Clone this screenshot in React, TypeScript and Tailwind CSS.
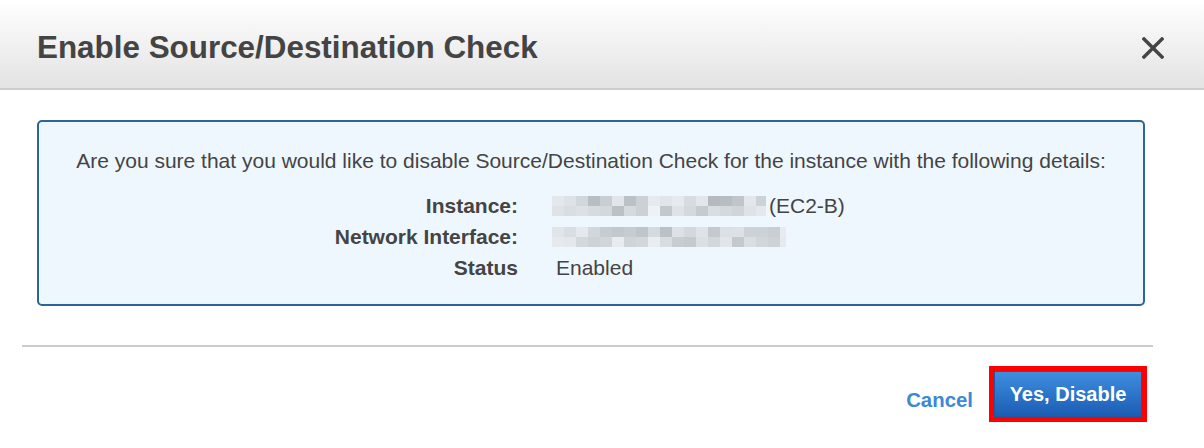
import React from "react";

// Nuances des blocs pixellisés (valeurs masquées)
const instanceBlur: string[][] = [
  ["#e4e8ec", "#dde2e6", "#d2d7dc", "#b9bec3", "#c9ced2", "#e2e6ea", "#bcc1c6", "#ccd1d5", "#e6eaee", "#e1e5e9", "#e6eaee", "#d7dce0", "#e3e7eb", "#b5babe", "#b8bdc1", "#c0c5c9", "#e3e7eb", "#cdd2d6"],
  ["#dfe3e7", "#d9dee2", "#dde1e5", "#d6dbdf", "#d3d8dc", "#bcc1c5", "#d5dade", "#ccd1d5", "#eef2f6", "#c3c8cc", "#dfe3e7", "#d4d9dd", "#c6cbcf", "#d9dee2", "#d4d9dd", "#d0d5d9", "#dfe3e7", "#e4e8ec"],
];

const networkBlur: string[][] = [
  ["#e1e5e9", "#d9dee2", "#e5e9ed", "#d2d7db", "#c7ccd0", "#c3c8cc", "#c7ccd0", "#c0c5c9", "#d5dade", "#bcc1c5", "#dde1e5", "#d3d8dc", "#dfe3e7", "#c4c9cd", "#dbe0e4", "#dde1e5", "#cdd2d6", "#cdd2d6", "#c9ced2", "#e8ecf0"],
  ["#e6eaee", "#e4e8ec", "#d3d8dc", "#cdd2d6", "#d0d5d9", "#e8ecf0", "#cfd4d8", "#d2d7db", "#e9edf1", "#d8dde1", "#c8cdd1", "#c5cacf", "#dbe0e4", "#d2d7db", "#e2e6ea", "#c4c9cd", "#d9dee2", "#d1d6da", "#cdd2d6", "#e6eaee"],
];

const BlurBlock: React.FC<{ cells: string[][]; lastWidth?: number }> = ({ cells, lastWidth }) => (
  <span className="inline-flex flex-col -ml-[2px]">
    {cells.map((row, r) => (
      <span key={r} className="flex">
        {row.map((c, i) => (
          <span
            key={i}
            className="h-[10px]"
            style={{
              backgroundColor: c,
              width: i === row.length - 1 && lastWidth ? lastWidth : 12,
            }}
          />
        ))}
      </span>
    ))}
  </span>
);

const DetailRow: React.FC<{ label: string; children: React.ReactNode }> = ({ label, children }) => (
  <div className="flex items-center h-[31px]">
    <div className="w-[479px] text-right font-bold">{label}</div>
    <div className="ml-[36px] flex items-center">{children}</div>
  </div>
);

export default function App() {
  return (
    <div className="w-[1204px] h-[448px] bg-white text-[#444444] font-['Liberation_Sans',Arial,sans-serif] overflow-hidden">
      {/* En-tête */}
      <header className="h-[90px] border-b-2 border-[#cdcdcd] bg-linear-to-b from-white to-[#e3e3e3] flex items-center justify-between pl-[37px] pr-[40px]">
        <h1 className="text-[31.4px] font-bold leading-none text-[#444444] mt-[7px]">
          Enable Source/Destination Check
        </h1>
        <button className="w-[22px] h-[22px] flex items-center justify-center mt-[8px]">
          <svg width="22" height="22" viewBox="0 0 22 22">
            <path d="M2 2 L20 20 M20 2 L2 20" stroke="#444444" strokeWidth="3.4" strokeLinecap="square" />
          </svg>
        </button>
      </header>

      {/* Contenu */}
      <div className="pt-[30px] pl-[37px] pr-[59px]">
        <div className="h-[186px] border-2 border-[#2d6597] rounded-[5px] bg-[#eff7fe] text-[21px] leading-[31px] pt-[23px]">
          <p className="text-center">
            Are you sure that you would like to disable Source/Destination Check for the instance with the following details:
          </p>
          <div className="mt-[14px]">
            <DetailRow label="Instance:">
              <BlurBlock cells={instanceBlur} lastWidth={10} />
              <span className="ml-[3px]">(EC2-B)</span>
            </DetailRow>
            <DetailRow label="Network Interface:">
              <BlurBlock cells={networkBlur} lastWidth={6} />
            </DetailRow>
            <DetailRow label="Status">
              <span className="ml-[2px]">Enabled</span>
            </DetailRow>
          </div>
        </div>
      </div>

      {/* Séparateur */}
      <div className="mt-[39px] ml-[22px] mr-[51px] h-[2px] bg-[#cbcbcb]" />

      {/* Pied de page */}
      <div className="mt-[19px] pr-[57px] flex justify-end items-center">
        <a className="text-[20.4px] font-bold text-[#3b89d6] mt-[13px] mr-[16px] cursor-pointer">Cancel</a>
        <span className="border-[5px] border-[#ff0000] flex">
          <button className="w-[148px] h-[46px] border border-[#1d5aa6] bg-linear-to-b from-[#3e8ee0] to-[#1c5db4] text-white text-[20px] font-bold">
            Yes, Disable
          </button>
        </span>
      </div>
    </div>
  );
}
